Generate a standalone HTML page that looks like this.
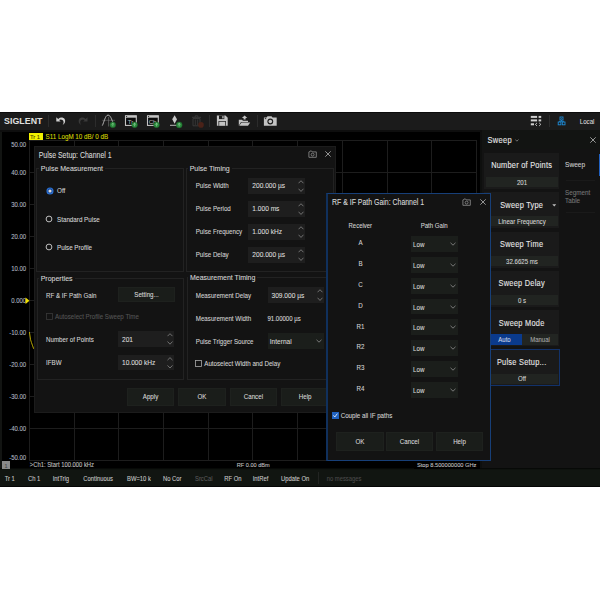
<!DOCTYPE html>
<html><head><meta charset="utf-8">
<style>
*{margin:0;padding:0;box-sizing:border-box}
html,body{width:600px;height:600px;background:#fff;overflow:hidden;position:relative;font-family:"Liberation Sans",sans-serif}
.a{position:absolute}
.t{position:absolute;white-space:nowrap;-webkit-text-stroke-width:0.08px;transform:scaleY(1.08)}
</style></head><body>
<div class="a" style="left:0px;top:112px;width:600px;height:18px;background:#1b1b1b;"></div>
<div class="a" style="left:0px;top:130px;width:600px;height:2px;background:#0e0e0e;"></div>
<div class="a" style="left:0px;top:132px;width:480px;height:337px;background:#000;"></div>
<div class="a" style="left:0px;top:132px;width:2px;height:337px;background:#121412;"></div>
<div class="a" style="left:480px;top:132px;width:2px;height:337px;background:#0e0f0e;"></div>
<div class="a" style="left:482px;top:132px;width:118px;height:337px;background:#131313;"></div>
<div class="a" style="left:0px;top:469px;width:600px;height:18px;background:#111511;"></div>
<div class="a" style="left:0px;top:468px;width:600px;height:1px;background:#070907;"></div>
<div class="a" style="left:0px;top:469px;width:600px;height:1px;background:#0e120e;"></div>
<div class="a" style="left:0px;top:486px;width:600px;height:1px;background:#050505;"></div>
<div class="a" style="left:0px;top:112px;width:600px;height:1px;background:#0c0c0c;"></div>
<div class="a" style="left:29px;top:140px;width:1px;height:321px;background:#1d1d1d;"></div>
<div class="a" style="left:74px;top:140px;width:1px;height:321px;background:#1d1d1d;"></div>
<div class="a" style="left:118px;top:140px;width:1px;height:321px;background:#1d1d1d;"></div>
<div class="a" style="left:163px;top:140px;width:1px;height:321px;background:#1d1d1d;"></div>
<div class="a" style="left:208px;top:140px;width:1px;height:321px;background:#1d1d1d;"></div>
<div class="a" style="left:252px;top:140px;width:1px;height:321px;background:#1d1d1d;"></div>
<div class="a" style="left:297px;top:140px;width:1px;height:321px;background:#1d1d1d;"></div>
<div class="a" style="left:342px;top:140px;width:1px;height:321px;background:#1d1d1d;"></div>
<div class="a" style="left:387px;top:140px;width:1px;height:321px;background:#1d1d1d;"></div>
<div class="a" style="left:431px;top:140px;width:1px;height:321px;background:#1d1d1d;"></div>
<div class="a" style="left:476px;top:140px;width:1px;height:321px;background:#1d1d1d;"></div>
<div class="a" style="left:29px;top:140px;width:448px;height:1px;background:#1d1d1d;"></div>
<div class="a" style="left:29px;top:172px;width:448px;height:1px;background:#1d1d1d;"></div>
<div class="a" style="left:29px;top:204px;width:448px;height:1px;background:#1d1d1d;"></div>
<div class="a" style="left:29px;top:236px;width:448px;height:1px;background:#1d1d1d;"></div>
<div class="a" style="left:29px;top:268px;width:448px;height:1px;background:#1d1d1d;"></div>
<div class="a" style="left:29px;top:300px;width:448px;height:1px;background:#1d1d1d;"></div>
<div class="a" style="left:29px;top:332px;width:448px;height:1px;background:#1d1d1d;"></div>
<div class="a" style="left:29px;top:364px;width:448px;height:1px;background:#1d1d1d;"></div>
<div class="a" style="left:29px;top:396px;width:448px;height:1px;background:#1d1d1d;"></div>
<div class="a" style="left:29px;top:428px;width:448px;height:1px;background:#1d1d1d;"></div>
<div class="a" style="left:29px;top:460px;width:448px;height:1px;background:#1d1d1d;"></div>
<div class="t" style="left:-173.8px;width:200px;text-align:right;top:140.0px;font-size:6.0px;color:#b0b8c0;line-height:10px;height:10px;">50.00</div>
<div class="t" style="left:-173.8px;width:200px;text-align:right;top:167.60000000000002px;font-size:6.0px;color:#b0b8c0;line-height:10px;height:10px;">40.00</div>
<div class="t" style="left:-173.8px;width:200px;text-align:right;top:199.60000000000002px;font-size:6.0px;color:#b0b8c0;line-height:10px;height:10px;">30.00</div>
<div class="t" style="left:-173.8px;width:200px;text-align:right;top:231.60000000000002px;font-size:6.0px;color:#b0b8c0;line-height:10px;height:10px;">20.00</div>
<div class="t" style="left:-173.8px;width:200px;text-align:right;top:263.6px;font-size:6.0px;color:#b0b8c0;line-height:10px;height:10px;">10.00</div>
<div class="t" style="left:-173.8px;width:200px;text-align:right;top:295.6px;font-size:6.0px;color:#b0b8c0;line-height:10px;height:10px;">0.000</div>
<div class="t" style="left:-173.8px;width:200px;text-align:right;top:327.6px;font-size:6.0px;color:#b0b8c0;line-height:10px;height:10px;">-10.00</div>
<div class="t" style="left:-173.8px;width:200px;text-align:right;top:359.6px;font-size:6.0px;color:#b0b8c0;line-height:10px;height:10px;">-20.00</div>
<div class="t" style="left:-173.8px;width:200px;text-align:right;top:391.6px;font-size:6.0px;color:#b0b8c0;line-height:10px;height:10px;">-30.00</div>
<div class="t" style="left:-173.8px;width:200px;text-align:right;top:423.6px;font-size:6.0px;color:#b0b8c0;line-height:10px;height:10px;">-40.00</div>
<div class="t" style="left:-173.8px;width:200px;text-align:right;top:453.0px;font-size:6.0px;color:#b0b8c0;line-height:10px;height:10px;">-50.00</div>
<div class="a" style="left:29.2px;top:132.6px;width:13.8px;height:7.4px;background:#f0f000;"></div>
<div class="t" style="left:30px;top:131.60000000000002px;font-size:5.8px;color:#404000;line-height:10px;height:10px;">Tr 1</div>
<div class="t" style="left:45.5px;top:131.60000000000002px;font-size:6.28px;color:#d8d800;line-height:10px;height:10px;">S11 LogM 10 dB/ 0 dB</div>
<svg class="a" style="left:25px;top:297px" width="5" height="8"><polygon points="0.5,0.5 4.5,3.8 0.5,7" fill="#f0e000"/></svg>
<svg class="a" style="left:28px;top:330px" width="8" height="22"><polyline points="1.4,2 2,6 2.6,9.8 3.4,12.4 4.4,15.2 5.7,18.8" stroke="#c8b800" stroke-width="0.9" fill="none"/></svg>
<div class="a" style="left:2px;top:461px;width:8px;height:8px;background:#8a8a8a;"></div>
<div class="t" style="left:-94px;width:200px;text-align:center;top:460.8px;font-size:5.5px;color:#444;line-height:10px;height:10px;">1</div>
<div class="t" style="left:29.8px;top:460.40000000000003px;font-size:5.85px;color:#c0c0c0;line-height:10px;height:10px;">&gt;Ch1: Start 100.000 kHz</div>
<div class="t" style="left:236.8px;top:460.2px;font-size:5.6px;color:#c0c0c0;line-height:10px;height:10px;">RF 0.00 dBm</div>
<div class="a" style="left:414px;top:461px;width:66px;height:8px;background:#000;"></div>
<div class="t" style="left:417px;top:460.0px;font-size:5.7px;color:#c0c0c0;line-height:10px;height:10px;">Stop 8.500000000 GHz</div>
<div class="t" style="left:4.7px;top:474.2px;font-size:5.85px;color:#c8c8c8;line-height:10px;height:10px;">Tr 1</div>
<div class="t" style="left:28px;top:474.2px;font-size:5.85px;color:#c8c8c8;line-height:10px;height:10px;">Ch 1</div>
<div class="t" style="left:52.7px;top:474.2px;font-size:5.85px;color:#c8c8c8;line-height:10px;height:10px;">IntTrig</div>
<div class="t" style="left:83.3px;top:474.2px;font-size:5.85px;color:#c8c8c8;line-height:10px;height:10px;">Continuous</div>
<div class="t" style="left:127px;top:474.2px;font-size:5.85px;color:#c8c8c8;line-height:10px;height:10px;">BW=10 k</div>
<div class="t" style="left:163px;top:474.2px;font-size:5.85px;color:#c8c8c8;line-height:10px;height:10px;">No Cor</div>
<div class="t" style="left:195px;top:474.2px;font-size:5.85px;color:#5a5a5a;line-height:10px;height:10px;">SrcCal</div>
<div class="t" style="left:224.3px;top:474.2px;font-size:5.85px;color:#c8c8c8;line-height:10px;height:10px;">RF On</div>
<div class="t" style="left:252.7px;top:474.2px;font-size:5.85px;color:#c8c8c8;line-height:10px;height:10px;">IntRef</div>
<div class="t" style="left:281px;top:474.2px;font-size:5.85px;color:#c8c8c8;line-height:10px;height:10px;">Update On</div>
<div class="t" style="left:326.7px;top:474.2px;font-size:5.85px;color:#4a4a4a;line-height:10px;height:10px;">no messages</div>
<div class="a" style="left:318px;top:472px;width:1px;height:12px;background:#222422;"></div>
<div class="t" style="left:4.2px;top:115.7px;font-size:8.4px;color:#e0e0e0;line-height:10px;height:10px;font-weight:bold;letter-spacing:0.05px;transform:scale(1.05,1.08);transform-origin:0 50%;-webkit-text-stroke-width:0">SIGLENT</div>
<div class="a" style="left:48px;top:115px;width:1px;height:12px;background:#2c2c2c;"></div>
<div class="a" style="left:95px;top:115px;width:1px;height:12px;background:#2c2c2c;"></div>
<div class="a" style="left:209px;top:115px;width:1px;height:12px;background:#2c2c2c;"></div>
<div class="a" style="left:257px;top:115px;width:1px;height:12px;background:#2c2c2c;"></div>
<div class="a" style="left:549px;top:115px;width:1px;height:12px;background:#2c2c2c;"></div>
<div class="t" style="left:579.7px;top:117.1px;font-size:6.2px;color:#d8d8d8;line-height:10px;height:10px;">Local</div>
<svg class="a" style="left:55px;top:115px" width="12" height="11"><path d="M1.3,2.2 L1.3,6.6 L5.6,6.6 L4.1,5.1 C5.6,4.1 8.1,4.6 8.5,6.6 C8.8,8 8.2,9.2 7.6,10 C10.2,8.8 10.8,6 9.6,4.1 C8.3,2.3 5.4,2 3.2,3.9 Z" fill="#d0d0d0"/></svg>
<svg class="a" style="left:77px;top:115px" width="12" height="11"><path d="M10.5,2.2 L10.5,6.6 L6.2,6.6 L7.7,5.1 C6.2,4.1 3.7,4.6 3.3,6.6 C3,8 3.6,9.2 4.2,10 C1.6,8.8 1,6 2.2,4.1 C3.5,2.3 6.4,2 8.6,3.9 Z" fill="#3a3a3a"/></svg>
<svg class="a" style="left:99px;top:112px" width="18" height="17"><path d="M3.2,8.3 H16" stroke="#6a6a6a" stroke-width="0.6"/><path d="M9.6,5 V14.5" stroke="#7a7a7a" stroke-width="0.6"/><path d="M3.3,13.6 C5,10.5 6.2,3.2 9,3.1 C11.6,3.1 12.6,7.6 14,10.5" stroke="#c8c8c8" stroke-width="0.85" fill="none"/><circle cx="13.8" cy="12.8" r="2.9" fill="#2a8a3c" stroke="#1c5e28" stroke-width="0.5"/><path d="M13.8,11.3 V14.3 M12.6,12.4 L13.8,11.3 L15,12.4" stroke="#a8dcae" stroke-width="0.5" fill="none"/></svg>
<svg class="a" style="left:123.5px;top:114px" width="16" height="14"><rect x="1.5" y="1.8" width="10.8" height="9.6" stroke="#c4c4c4" stroke-width="1.1" fill="#0c0c0c"/><rect x="1.3" y="1.6" width="11.2" height="2.1" fill="#c4c4c4"/><rect x="2.1" y="2.1" width="1" height="0.9" fill="#1b1b1b"/><text x="6.6" y="9.9" font-family="Liberation Sans" font-size="6.2" fill="#b8b8b8" text-anchor="middle" transform="translate(0.01,0.01)">Tr</text><circle cx="10.6" cy="10.8" r="2.9" fill="#2a8a3c" stroke="#1c5e28" stroke-width="0.5"/><path d="M10.6,9.3 V12.3 M9.4,10.4 L10.6,9.3 L11.8,10.4" stroke="#bfe8c4" stroke-width="0.5" fill="none"/></svg>
<svg class="a" style="left:145.5px;top:114px" width="16" height="14"><rect x="1.5" y="1.8" width="10.8" height="9.6" stroke="#c4c4c4" stroke-width="1.1" fill="#0c0c0c"/><rect x="1.3" y="1.6" width="11.2" height="2.1" fill="#c4c4c4"/><rect x="2.1" y="2.1" width="1" height="0.9" fill="#1b1b1b"/><text x="6.6" y="9.9" font-family="Liberation Sans" font-size="6.2" fill="#b8b8b8" text-anchor="middle" transform="translate(0.01,0.01)">Ch</text><circle cx="10.5" cy="10.8" r="2.9" fill="#2a8a3c" stroke="#1c5e28" stroke-width="0.5"/><path d="M10.6,9.3 V12.3 M9.4,10.4 L10.6,9.3 L11.8,10.4" stroke="#bfe8c4" stroke-width="0.5" fill="none"/></svg>
<svg class="a" style="left:169px;top:114px" width="14" height="15"><path d="M5.6,1.2 L8,5.2 L5.6,9.8 L3.2,5.2 Z" fill="#c8c8c8"/><path d="M1,11.3 H8" stroke="#c8c8c8" stroke-width="0.9"/><circle cx="10.2" cy="10.9" r="3" fill="#2a8a3c" stroke="#1c5e28" stroke-width="0.5"/><path d="M10.2,9.4 V12.4 M9,10.5 L10.2,9.4 L11.4,10.5" stroke="#bfe8c4" stroke-width="0.5" fill="none"/></svg>
<svg class="a" style="left:191px;top:114px" width="14" height="15"><path d="M1,3.3 H10" stroke="#3c3c3c" stroke-width="0.9"/><path d="M4.2,3 V1.8 H6.8 V3" stroke="#3c3c3c" stroke-width="0.8" fill="none"/><path d="M2,4.6 H9 V11.8 H2 Z" stroke="#3c3c3c" stroke-width="0.9" fill="none"/><path d="M4.3,5.5 V11 M6.7,5.5 V11" stroke="#3c3c3c" stroke-width="0.8"/><circle cx="10" cy="10.9" r="2.8" fill="#4a2218"/></svg>
<svg class="a" style="left:216px;top:115px" width="13" height="12"><path d="M0.9,0.5 H9.5 L11.7,2.7 V10.8 H0.9 Z" fill="#c4c4c4"/><rect x="3" y="0.5" width="5.3" height="3.6" fill="#1b1b1b"/><rect x="6.3" y="1.1" width="1.3" height="2.3" fill="#c4c4c4"/><rect x="2.5" y="6" width="7.4" height="4.8" fill="#1b1b1b"/><rect x="3.2" y="6.7" width="6" height="4.1" fill="#c4c4c4"/></svg>
<svg class="a" style="left:238px;top:115px" width="14" height="12"><path d="M0.8,4.8 H4 L5,5.8 H10 V7 H3 L0.8,10.8 Z" fill="#c4c4c4"/><path d="M3.5,7.6 H12.2 L10,10.8 H1.2 Z" fill="#c4c4c4"/><path d="M6.6,0.4 L9.3,3 H7.6 V4.6 H5.6 V3 H3.9 Z" fill="#c4c4c4"/></svg>
<svg class="a" style="left:263px;top:115px" width="15" height="12"><path d="M0.9,2.4 H3.5 L4.5,1.2 H8.5 L9.5,2.4 H13.7 V10.8 H0.9 Z" fill="#c4c4c4"/><circle cx="7.3" cy="6.5" r="2.9" fill="#1b1b1b"/><circle cx="7.3" cy="6.5" r="1.8" fill="#c4c4c4"/><rect x="1.8" y="3.2" width="1.4" height="0.9" fill="#1b1b1b"/></svg>
<svg class="a" style="left:530px;top:115px" width="13" height="12"><rect x="0.8" y="0.9" width="6.3" height="2" fill="#d0d0d0"/><rect x="8.6" y="0.9" width="2.6" height="2" fill="#d0d0d0"/><rect x="0.8" y="4.4" width="6.3" height="2" fill="#d0d0d0"/><rect x="8.6" y="4.4" width="2.6" height="2" fill="#d0d0d0"/><rect x="0.8" y="8.3" width="3.2" height="2" fill="#d0d0d0"/><path d="M7,7.9 L5.4,9.4 L7,10.9 M9.2,7.9 L10.8,9.4 L9.2,10.9" stroke="#d0d0d0" stroke-width="0.9" fill="none"/></svg>
<svg class="a" style="left:557px;top:116px" width="10" height="10"><rect x="3" y="1" width="3" height="3" stroke="#1e8ad6" stroke-width="0.9" fill="none"/><rect x="4.1" y="2.1" width="0.8" height="0.8" fill="#1e8ad6"/><path d="M4.5,4 V5.3 M2.5,5.3 H6.5 M2.5,5.3 V6 M6.5,5.3 V6" stroke="#1e8ad6" stroke-width="0.8"/><rect x="1.2" y="6" width="2.7" height="2.8" stroke="#1e8ad6" stroke-width="0.9" fill="none"/><rect x="5.3" y="6" width="2.7" height="2.8" stroke="#1e8ad6" stroke-width="0.9" fill="none"/></svg>
<div class="a" style="left:482px;top:130px;width:118px;height:18.5px;background:#121412;"></div>
<div class="t" style="left:487.5px;top:135.5px;font-size:7.5px;color:#e6e6e6;line-height:10px;height:10px;letter-spacing:0.3px;-webkit-text-stroke:0.1px #e6e6e6;transform:scaleY(1.2)">Sweep</div>
<svg class="a" style="left:514.8px;top:139px" width="4" height="3"><polyline points="0.3,0.5 1.9,2.2 3.5,0.5" stroke="#b0b0b0" stroke-width="0.6" fill="none"/></svg>
<svg class="a" style="left:589.8px;top:137px" width="6" height="6"><path d="M0.3,0.3 L5.7,5.7 M5.7,0.3 L0.3,5.7" stroke="#b8b8b8" stroke-width="0.8"/></svg>
<div class="a" style="left:484.2px;top:152.8px;width:75.3px;height:36.3px;background:#1a1a1a;"></div>
<div class="t" style="left:421.70000000000005px;width:200px;text-align:center;top:161.40000000000003px;font-size:7.4px;color:#e6e6e6;line-height:10px;height:10px;letter-spacing:0.25px;-webkit-text-stroke:0.1px #e6e6e6;transform:scaleY(1.22)">Number of Points</div>
<div class="a" style="left:486.2px;top:177.10000000000002px;width:72px;height:10.2px;background:#212421;"></div>
<div class="t" style="left:422px;width:200px;text-align:center;top:178.00000000000003px;font-size:6.1px;color:#d4d4d4;line-height:10px;height:10px;">201</div>
<div class="a" style="left:484.2px;top:192px;width:75.3px;height:36.3px;background:#1a1a1a;"></div>
<div class="t" style="left:421.70000000000005px;width:200px;text-align:center;top:200.60000000000002px;font-size:7.4px;color:#e6e6e6;line-height:10px;height:10px;letter-spacing:0.25px;-webkit-text-stroke:0.1px #e6e6e6;transform:scaleY(1.22)">Sweep Type</div>
<div class="a" style="left:486.2px;top:216.3px;width:72px;height:10.2px;background:#212421;"></div>
<div class="t" style="left:422px;width:200px;text-align:center;top:217.20000000000002px;font-size:6.1px;color:#d4d4d4;line-height:10px;height:10px;">Linear Frequency</div>
<div class="a" style="left:484.2px;top:231.7px;width:75.3px;height:36.3px;background:#1a1a1a;"></div>
<div class="t" style="left:421.70000000000005px;width:200px;text-align:center;top:240.3px;font-size:7.4px;color:#e6e6e6;line-height:10px;height:10px;letter-spacing:0.25px;-webkit-text-stroke:0.1px #e6e6e6;transform:scaleY(1.22)">Sweep Time</div>
<div class="a" style="left:486.2px;top:256.0px;width:72px;height:10.2px;background:#212421;"></div>
<div class="t" style="left:422px;width:200px;text-align:center;top:256.9px;font-size:6.1px;color:#d4d4d4;line-height:10px;height:10px;">32.6625 ms</div>
<div class="a" style="left:484.2px;top:270.6px;width:75.3px;height:36.3px;background:#1a1a1a;"></div>
<div class="t" style="left:421.70000000000005px;width:200px;text-align:center;top:279.20000000000005px;font-size:7.4px;color:#e6e6e6;line-height:10px;height:10px;letter-spacing:0.25px;-webkit-text-stroke:0.1px #e6e6e6;transform:scaleY(1.22)">Sweep Delay</div>
<div class="a" style="left:486.2px;top:294.90000000000003px;width:72px;height:10.2px;background:#212421;"></div>
<div class="t" style="left:422px;width:200px;text-align:center;top:295.8px;font-size:6.1px;color:#d4d4d4;line-height:10px;height:10px;">0 s</div>
<div class="a" style="left:484.2px;top:310px;width:75.3px;height:36.3px;background:#1a1a1a;"></div>
<div class="t" style="left:421.70000000000005px;width:200px;text-align:center;top:318.6px;font-size:7.4px;color:#e6e6e6;line-height:10px;height:10px;letter-spacing:0.25px;-webkit-text-stroke:0.1px #e6e6e6;transform:scaleY(1.22)">Sweep Mode</div>
<div class="a" style="left:486.2px;top:334px;width:35.9px;height:11.1px;background:#0a3a8c;"></div>
<div class="a" style="left:522.1px;top:334px;width:36.2px;height:11.1px;background:#222522;"></div>
<div class="t" style="left:404.5px;width:200px;text-align:center;top:335.2px;font-size:6.0px;color:#d0d8e8;line-height:10px;height:10px;">Auto</div>
<div class="t" style="left:440px;width:200px;text-align:center;top:335.2px;font-size:6.0px;color:#a8a8a8;line-height:10px;height:10px;">Manual</div>
<div class="a" style="left:484.2px;top:349.2px;width:75.5px;height:36.5px;background:#1a1a1a;border:1px solid #12326a;"></div>
<div class="t" style="left:421.70000000000005px;width:200px;text-align:center;top:357.8px;font-size:7.4px;color:#e6e6e6;line-height:10px;height:10px;letter-spacing:0.25px;-webkit-text-stroke:0.1px #e6e6e6;transform:scaleY(1.22)">Pulse Setup...</div>
<div class="a" style="left:486.2px;top:373.5px;width:72px;height:10.2px;background:#212421;"></div>
<div class="t" style="left:422px;width:200px;text-align:center;top:374.4px;font-size:6.1px;color:#d4d4d4;line-height:10px;height:10px;">Off</div>
<svg class="a" style="left:551.8px;top:203.5px" width="5" height="4"><polygon points="0.3,0.3 4.2,0.3 2.25,2.6" fill="#c0c0c0"/></svg>
<div class="t" style="left:565px;top:160.3px;font-size:6.6px;color:#cccccc;line-height:10px;height:10px;">Sweep</div>
<div class="a" style="left:599px;top:154px;width:1px;height:22px;background:#2060c0;"></div>
<div class="a" style="left:566px;top:180px;width:29px;height:1px;background:#1a1a1a;"></div>
<div class="t" style="left:565px;top:187.8px;font-size:6.3px;color:#767676;line-height:10px;height:10px;">Segment</div>
<div class="t" style="left:565px;top:196.20000000000002px;font-size:6.3px;color:#767676;line-height:10px;height:10px;">Table</div>
<div class="a" style="left:566px;top:212px;width:29px;height:1px;background:#1a1a1a;"></div>
<div class="a" style="left:34px;top:146px;width:302px;height:267px;background:#131313;border:1px solid #1c1c1c;"></div>
<div class="t" style="left:38.7px;top:150.5px;font-size:6.95px;color:#d8d8d8;line-height:10px;height:10px;transform:scaleY(1.2)">Pulse Setup: Channel 1</div>
<svg class="a" style="left:307.5px;top:150px" width="10" height="9"><path d="M0.9,1.9 H1.4 L2,1 H3.6 L4.2,1.9 H8.3 V7.3 H0.9 Z" stroke="#8a8a8a" stroke-width="0.85" fill="none"/><circle cx="4.6" cy="4.6" r="1.45" stroke="#8a8a8a" stroke-width="0.85" fill="none"/></svg>
<svg class="a" style="left:325.2px;top:151px" width="6" height="6"><path d="M0.3,0.3 L5.7,5.7 M5.7,0.3 L0.3,5.7" stroke="#a0a0a0" stroke-width="0.9"/></svg>
<div class="a" style="left:36px;top:168px;width:1px;height:104px;background:#222222;"></div>
<div class="a" style="left:183px;top:168px;width:1px;height:104px;background:#222222;"></div>
<div class="a" style="left:36px;top:271px;width:148px;height:1px;background:#222222;"></div>
<div class="a" style="left:36px;top:168px;width:2.799999999999997px;height:1px;background:#222222;"></div>
<div class="a" style="left:105.3px;top:168px;width:78.7px;height:1px;background:#222222;"></div>
<div class="t" style="left:40.8px;top:164.3px;font-size:7px;color:#d6d6d6;line-height:10px;height:10px;">Pulse Measurement</div>
<svg class="a" style="left:45.5px;top:186.5px" width="8" height="8"><circle cx="4" cy="4" r="3" stroke="#2a72d8" stroke-width="1.1" fill="#1a4a98"/><circle cx="4" cy="4" r="1.55" fill="#dcdcdc"/></svg>
<div class="t" style="left:57px;top:186.3px;font-size:6.3px;color:#d2d2d2;line-height:10px;height:10px;">Off</div>
<svg class="a" style="left:45.25px;top:215px" width="8" height="8"><circle cx="4" cy="4" r="2.9" stroke="#d0d0d0" stroke-width="0.9" fill="none"/></svg>
<div class="t" style="left:57px;top:214.8px;font-size:6.25px;color:#d2d2d2;line-height:10px;height:10px;">Standard Pulse</div>
<svg class="a" style="left:45.25px;top:243px" width="8" height="8"><circle cx="4" cy="4" r="2.9" stroke="#d0d0d0" stroke-width="0.9" fill="none"/></svg>
<div class="t" style="left:57px;top:242.8px;font-size:6.25px;color:#d2d2d2;line-height:10px;height:10px;">Pulse Profile</div>
<div class="a" style="left:186px;top:168px;width:1px;height:104px;background:#222222;"></div>
<div class="a" style="left:333px;top:168px;width:1px;height:104px;background:#222222;"></div>
<div class="a" style="left:186px;top:271px;width:148px;height:1px;background:#222222;"></div>
<div class="a" style="left:186px;top:168px;width:1.6999999999999886px;height:1px;background:#222222;"></div>
<div class="a" style="left:231.7px;top:168px;width:102.30000000000001px;height:1px;background:#222222;"></div>
<div class="t" style="left:189.7px;top:164.3px;font-size:7px;color:#d6d6d6;line-height:10px;height:10px;">Pulse Timing</div>
<div class="t" style="left:195.7px;top:181.3px;font-size:6.2px;color:#d2d2d2;line-height:10px;height:10px;">Pulse Width</div>
<div class="a" style="left:248.3px;top:177.5px;width:56.39999999999998px;height:16.0px;background:#1e1e1e;"></div>
<div class="t" style="left:252.3px;top:181.3px;font-size:6.6px;color:#dcdcdc;line-height:10px;height:10px;">200.000 µs</div>
<svg class="a" style="left:297.5px;top:177.5px" width="6" height="16.0"><polyline points="0.5,5.28 3,2.72 5.5,5.28" stroke="#8c8c8c" stroke-width="0.75" fill="none"/><polyline points="0.5,10.72 3,13.44 5.5,10.72" stroke="#8c8c8c" stroke-width="0.75" fill="none"/></svg>
<div class="t" style="left:195.7px;top:204.3px;font-size:6.2px;color:#d2d2d2;line-height:10px;height:10px;">Pulse Period</div>
<div class="a" style="left:248.3px;top:200.5px;width:56.39999999999998px;height:16.0px;background:#1e1e1e;"></div>
<div class="t" style="left:252.3px;top:204.3px;font-size:6.6px;color:#dcdcdc;line-height:10px;height:10px;">1.000 ms</div>
<svg class="a" style="left:297.5px;top:200.5px" width="6" height="16.0"><polyline points="0.5,5.28 3,2.72 5.5,5.28" stroke="#8c8c8c" stroke-width="0.75" fill="none"/><polyline points="0.5,10.72 3,13.44 5.5,10.72" stroke="#8c8c8c" stroke-width="0.75" fill="none"/></svg>
<div class="t" style="left:195.7px;top:227.3px;font-size:6.2px;color:#d2d2d2;line-height:10px;height:10px;">Pulse Frequency</div>
<div class="a" style="left:248.3px;top:223.5px;width:56.39999999999998px;height:16.0px;background:#1e1e1e;"></div>
<div class="t" style="left:252.3px;top:227.3px;font-size:6.6px;color:#dcdcdc;line-height:10px;height:10px;">1.000 kHz</div>
<svg class="a" style="left:297.5px;top:223.5px" width="6" height="16.0"><polyline points="0.5,5.28 3,2.72 5.5,5.28" stroke="#8c8c8c" stroke-width="0.75" fill="none"/><polyline points="0.5,10.72 3,13.44 5.5,10.72" stroke="#8c8c8c" stroke-width="0.75" fill="none"/></svg>
<div class="t" style="left:195.7px;top:250.3px;font-size:6.2px;color:#d2d2d2;line-height:10px;height:10px;">Pulse Delay</div>
<div class="a" style="left:248.3px;top:246.5px;width:56.39999999999998px;height:16.0px;background:#1e1e1e;"></div>
<div class="t" style="left:252.3px;top:250.3px;font-size:6.6px;color:#dcdcdc;line-height:10px;height:10px;">200.000 µs</div>
<svg class="a" style="left:297.5px;top:246.5px" width="6" height="16.0"><polyline points="0.5,5.28 3,2.72 5.5,5.28" stroke="#8c8c8c" stroke-width="0.75" fill="none"/><polyline points="0.5,10.72 3,13.44 5.5,10.72" stroke="#8c8c8c" stroke-width="0.75" fill="none"/></svg>
<div class="a" style="left:37px;top:277.5px;width:1px;height:102.5px;background:#222222;"></div>
<div class="a" style="left:183px;top:277.5px;width:1px;height:102.5px;background:#222222;"></div>
<div class="a" style="left:37px;top:379px;width:147px;height:1px;background:#222222;"></div>
<div class="a" style="left:37px;top:277.5px;width:1.7000000000000028px;height:1px;background:#222222;"></div>
<div class="a" style="left:74.7px;top:277.5px;width:109.3px;height:1px;background:#222222;"></div>
<div class="t" style="left:40.7px;top:273.8px;font-size:7px;color:#d6d6d6;line-height:10px;height:10px;">Properties</div>
<div class="t" style="left:46px;top:290.5px;font-size:6.2px;color:#d2d2d2;line-height:10px;height:10px;">RF &amp; IF Path Gain</div>
<div class="a" style="left:118px;top:287px;width:57px;height:15px;background:#1a1d1a;border:1px solid #1e211e;"></div>
<div class="t" style="left:46.5px;width:200px;text-align:center;top:290.3px;font-size:6.2px;color:#d8d8d8;line-height:10px;height:10px;">Setting...</div>
<svg class="a" style="left:46px;top:313.2px" width="7.6" height="7.6"><rect x="0.45" y="0.45" width="6.1" height="6.1" stroke="#3a3a3a" stroke-width="0.8" fill="none"/></svg>
<div class="t" style="left:55px;top:312.3px;font-size:6.2px;color:#555555;line-height:10px;height:10px;">Autoselect Profile Sweep Time</div>
<div class="t" style="left:46px;top:334.8px;font-size:6.2px;color:#d2d2d2;line-height:10px;height:10px;">Number of Points</div>
<div class="a" style="left:118px;top:331.3px;width:56.19999999999999px;height:15.699999999999989px;background:#1e1e1e;"></div>
<div class="t" style="left:122px;top:334.95px;font-size:6.6px;color:#dcdcdc;line-height:10px;height:10px;">201</div>
<svg class="a" style="left:167.0px;top:331.3px" width="6" height="15.699999999999989"><polyline points="0.5,5.1809999999999965 3,2.6689999999999983 5.5,5.1809999999999965" stroke="#8c8c8c" stroke-width="0.75" fill="none"/><polyline points="0.5,10.518999999999993 3,13.18799999999999 5.5,10.518999999999993" stroke="#8c8c8c" stroke-width="0.75" fill="none"/></svg>
<div class="t" style="left:46px;top:357.8px;font-size:6.2px;color:#d2d2d2;line-height:10px;height:10px;">IFBW</div>
<div class="a" style="left:118px;top:354.5px;width:56.19999999999999px;height:15.5px;background:#1e1e1e;"></div>
<div class="t" style="left:122px;top:358.05px;font-size:6.6px;color:#dcdcdc;line-height:10px;height:10px;">10.000 kHz</div>
<svg class="a" style="left:167.0px;top:354.5px" width="6" height="15.5"><polyline points="0.5,5.115 3,2.6350000000000002 5.5,5.115" stroke="#8c8c8c" stroke-width="0.75" fill="none"/><polyline points="0.5,10.385 3,13.02 5.5,10.385" stroke="#8c8c8c" stroke-width="0.75" fill="none"/></svg>
<div class="a" style="left:187px;top:277px;width:1px;height:103px;background:#222222;"></div>
<div class="a" style="left:333px;top:277px;width:1px;height:103px;background:#222222;"></div>
<div class="a" style="left:187px;top:379px;width:147px;height:1px;background:#222222;"></div>
<div class="a" style="left:187px;top:277px;width:1px;height:1px;background:#222222;"></div>
<div class="a" style="left:256.5px;top:277px;width:77.5px;height:1px;background:#222222;"></div>
<div class="t" style="left:190px;top:273.3px;font-size:7px;color:#d6d6d6;line-height:10px;height:10px;">Measurement Timing</div>
<div class="t" style="left:195.75px;top:290.8px;font-size:6.2px;color:#d2d2d2;line-height:10px;height:10px;">Measurement Delay</div>
<div class="a" style="left:267.5px;top:287px;width:56.25px;height:16px;background:#1e1e1e;"></div>
<div class="t" style="left:271.5px;top:290.8px;font-size:6.6px;color:#dcdcdc;line-height:10px;height:10px;">309.000 µs</div>
<svg class="a" style="left:316.55px;top:287px" width="6" height="16"><polyline points="0.5,5.28 3,2.72 5.5,5.28" stroke="#8c8c8c" stroke-width="0.75" fill="none"/><polyline points="0.5,10.72 3,13.44 5.5,10.72" stroke="#8c8c8c" stroke-width="0.75" fill="none"/></svg>
<div class="t" style="left:195.75px;top:313.8px;font-size:6.2px;color:#d2d2d2;line-height:10px;height:10px;">Measurement Width</div>
<div class="t" style="left:267.5px;top:313.8px;font-size:6.0px;color:#d8d8d8;line-height:10px;height:10px;">91.00000 µs</div>
<div class="t" style="left:195.75px;top:336.55px;font-size:6.2px;color:#d2d2d2;line-height:10px;height:10px;">Pulse Trigger Source</div>
<div class="a" style="left:267.5px;top:333px;width:56.25px;height:16.25px;background:#1b1e1b;"></div>
<div class="t" style="left:269.8px;top:337.225px;font-size:6.55px;color:#d8d8d8;line-height:10px;height:10px;">Internal</div>
<svg class="a" style="left:315.75px;top:339.125px" width="6" height="4"><polyline points="0.5,0.8 3,3.2 5.5,0.8" stroke="#a0a0a0" stroke-width="0.7" fill="none"/></svg>
<svg class="a" style="left:195px;top:360px" width="7.6" height="7.6"><rect x="0.45" y="0.45" width="6.1" height="6.1" stroke="#a8a8a8" stroke-width="0.8" fill="none"/></svg>
<div class="t" style="left:204.25px;top:358.8px;font-size:6.2px;color:#d2d2d2;line-height:10px;height:10px;">Autoselect Width and Delay</div>
<div class="a" style="left:127px;top:387.5px;width:47px;height:18.0px;background:#1a1d1a;border:1px solid #1e211e;"></div>
<div class="t" style="left:50.5px;width:200px;text-align:center;top:392.3px;font-size:6.2px;color:#d8d8d8;line-height:10px;height:10px;">Apply</div>
<div class="a" style="left:178px;top:387.5px;width:47.80000000000001px;height:18.0px;background:#1a1d1a;border:1px solid #1e211e;"></div>
<div class="t" style="left:101.9px;width:200px;text-align:center;top:392.3px;font-size:6.2px;color:#d8d8d8;line-height:10px;height:10px;">OK</div>
<div class="a" style="left:230px;top:387.5px;width:46.80000000000001px;height:18.0px;background:#1a1d1a;border:1px solid #1e211e;"></div>
<div class="t" style="left:153.4px;width:200px;text-align:center;top:392.3px;font-size:6.2px;color:#d8d8d8;line-height:10px;height:10px;">Cancel</div>
<div class="a" style="left:281.3px;top:387.5px;width:47.69999999999999px;height:18.0px;background:#1a1d1a;border:1px solid #1e211e;"></div>
<div class="t" style="left:205.14999999999998px;width:200px;text-align:center;top:392.3px;font-size:6.2px;color:#d8d8d8;line-height:10px;height:10px;">Help</div>
<div class="a" style="left:326px;top:193px;width:165px;height:268px;background:#131313;border:1px solid #173f78;border-left:2px solid #10305c;"></div>
<div class="t" style="left:332px;top:197.70000000000002px;font-size:6.95px;color:#d8d8d8;line-height:10px;height:10px;transform:scaleY(1.2)">RF &amp; IF Path Gain: Channel 1</div>
<svg class="a" style="left:462px;top:198px" width="10" height="9"><path d="M0.9,1.9 H1.4 L2,1 H3.6 L4.2,1.9 H8.3 V7.3 H0.9 Z" stroke="#8a8a8a" stroke-width="0.85" fill="none"/><circle cx="4.6" cy="4.6" r="1.45" stroke="#8a8a8a" stroke-width="0.85" fill="none"/></svg>
<svg class="a" style="left:480px;top:198.5px" width="6" height="6"><path d="M0.3,0.3 L5.7,5.7 M5.7,0.3 L0.3,5.7" stroke="#a0a0a0" stroke-width="0.9"/></svg>
<div class="t" style="left:260.3px;width:200px;text-align:center;top:221.10000000000002px;font-size:5.95px;color:#d2d2d2;line-height:10px;height:10px;">Receiver</div>
<div class="t" style="left:334.2px;width:200px;text-align:center;top:220.8px;font-size:6.1px;color:#d2d2d2;line-height:10px;height:10px;">Path Gain</div>
<div class="t" style="left:260.5px;width:200px;text-align:center;top:238.4px;font-size:6.2px;color:#d2d2d2;line-height:10px;height:10px;">A</div>
<div class="a" style="left:410.8px;top:236.2px;width:47.0px;height:15.800000000000011px;background:#1b1e1b;"></div>
<div class="t" style="left:413.1px;top:240.20000000000002px;font-size:6.2px;color:#d8d8d8;line-height:10px;height:10px;">Low</div>
<svg class="a" style="left:449.8px;top:242.1px" width="6" height="4"><polyline points="0.5,0.8 3,3.2 5.5,0.8" stroke="#a0a0a0" stroke-width="0.7" fill="none"/></svg>
<div class="t" style="left:260.5px;width:200px;text-align:center;top:259.2px;font-size:6.2px;color:#d2d2d2;line-height:10px;height:10px;">B</div>
<div class="a" style="left:410.8px;top:257.0px;width:47.0px;height:15.800000000000011px;background:#1b1e1b;"></div>
<div class="t" style="left:413.1px;top:261.0px;font-size:6.2px;color:#d8d8d8;line-height:10px;height:10px;">Low</div>
<svg class="a" style="left:449.8px;top:262.9px" width="6" height="4"><polyline points="0.5,0.8 3,3.2 5.5,0.8" stroke="#a0a0a0" stroke-width="0.7" fill="none"/></svg>
<div class="t" style="left:260.5px;width:200px;text-align:center;top:280.0px;font-size:6.2px;color:#d2d2d2;line-height:10px;height:10px;">C</div>
<div class="a" style="left:410.8px;top:277.8px;width:47.0px;height:15.800000000000011px;background:#1b1e1b;"></div>
<div class="t" style="left:413.1px;top:281.80000000000007px;font-size:6.2px;color:#d8d8d8;line-height:10px;height:10px;">Low</div>
<svg class="a" style="left:449.8px;top:283.70000000000005px" width="6" height="4"><polyline points="0.5,0.8 3,3.2 5.5,0.8" stroke="#a0a0a0" stroke-width="0.7" fill="none"/></svg>
<div class="t" style="left:260.5px;width:200px;text-align:center;top:300.8px;font-size:6.2px;color:#d2d2d2;line-height:10px;height:10px;">D</div>
<div class="a" style="left:410.8px;top:298.6px;width:47.0px;height:15.799999999999955px;background:#1b1e1b;"></div>
<div class="t" style="left:413.1px;top:302.6px;font-size:6.2px;color:#d8d8d8;line-height:10px;height:10px;">Low</div>
<svg class="a" style="left:449.8px;top:304.5px" width="6" height="4"><polyline points="0.5,0.8 3,3.2 5.5,0.8" stroke="#a0a0a0" stroke-width="0.7" fill="none"/></svg>
<div class="t" style="left:260.5px;width:200px;text-align:center;top:321.6px;font-size:6.2px;color:#d2d2d2;line-height:10px;height:10px;">R1</div>
<div class="a" style="left:410.8px;top:319.4px;width:47.0px;height:15.800000000000011px;background:#1b1e1b;"></div>
<div class="t" style="left:413.1px;top:323.4px;font-size:6.2px;color:#d8d8d8;line-height:10px;height:10px;">Low</div>
<svg class="a" style="left:449.8px;top:325.29999999999995px" width="6" height="4"><polyline points="0.5,0.8 3,3.2 5.5,0.8" stroke="#a0a0a0" stroke-width="0.7" fill="none"/></svg>
<div class="t" style="left:260.5px;width:200px;text-align:center;top:342.40000000000003px;font-size:6.2px;color:#d2d2d2;line-height:10px;height:10px;">R2</div>
<div class="a" style="left:410.8px;top:340.2px;width:47.0px;height:15.800000000000011px;background:#1b1e1b;"></div>
<div class="t" style="left:413.1px;top:344.20000000000005px;font-size:6.2px;color:#d8d8d8;line-height:10px;height:10px;">Low</div>
<svg class="a" style="left:449.8px;top:346.1px" width="6" height="4"><polyline points="0.5,0.8 3,3.2 5.5,0.8" stroke="#a0a0a0" stroke-width="0.7" fill="none"/></svg>
<div class="t" style="left:260.5px;width:200px;text-align:center;top:363.2px;font-size:6.2px;color:#d2d2d2;line-height:10px;height:10px;">R3</div>
<div class="a" style="left:410.8px;top:361.0px;width:47.0px;height:15.800000000000011px;background:#1b1e1b;"></div>
<div class="t" style="left:413.1px;top:365.0px;font-size:6.2px;color:#d8d8d8;line-height:10px;height:10px;">Low</div>
<svg class="a" style="left:449.8px;top:366.9px" width="6" height="4"><polyline points="0.5,0.8 3,3.2 5.5,0.8" stroke="#a0a0a0" stroke-width="0.7" fill="none"/></svg>
<div class="t" style="left:260.5px;width:200px;text-align:center;top:384.0px;font-size:6.2px;color:#d2d2d2;line-height:10px;height:10px;">R4</div>
<div class="a" style="left:410.8px;top:381.79999999999995px;width:47.0px;height:15.800000000000068px;background:#1b1e1b;"></div>
<div class="t" style="left:413.1px;top:385.8px;font-size:6.2px;color:#d8d8d8;line-height:10px;height:10px;">Low</div>
<svg class="a" style="left:449.8px;top:387.7px" width="6" height="4"><polyline points="0.5,0.8 3,3.2 5.5,0.8" stroke="#a0a0a0" stroke-width="0.7" fill="none"/></svg>
<svg class="a" style="left:331.7px;top:412.2px" width="8" height="8"><rect x="0" y="0" width="7" height="7" fill="#2062c0"/><polyline points="1.4,3.4 2.8,5 5.4,1.6" stroke="#fff" stroke-width="0.8" fill="none"/></svg>
<div class="t" style="left:340.7px;top:411.2px;font-size:6.2px;color:#d2d2d2;line-height:10px;height:10px;">Couple all IF paths</div>
<div class="a" style="left:336.3px;top:432px;width:47.39999999999998px;height:19px;background:#1a1d1a;border:1px solid #1e211e;"></div>
<div class="t" style="left:260.0px;width:200px;text-align:center;top:437.3px;font-size:6.2px;color:#d8d8d8;line-height:10px;height:10px;">OK</div>
<div class="a" style="left:386px;top:432px;width:47px;height:19px;background:#1a1d1a;border:1px solid #1e211e;"></div>
<div class="t" style="left:309.5px;width:200px;text-align:center;top:437.3px;font-size:6.2px;color:#d8d8d8;line-height:10px;height:10px;">Cancel</div>
<div class="a" style="left:436px;top:432px;width:47px;height:19px;background:#1a1d1a;border:1px solid #1e211e;"></div>
<div class="t" style="left:359.5px;width:200px;text-align:center;top:437.3px;font-size:6.2px;color:#d8d8d8;line-height:10px;height:10px;">Help</div>
</body></html>
